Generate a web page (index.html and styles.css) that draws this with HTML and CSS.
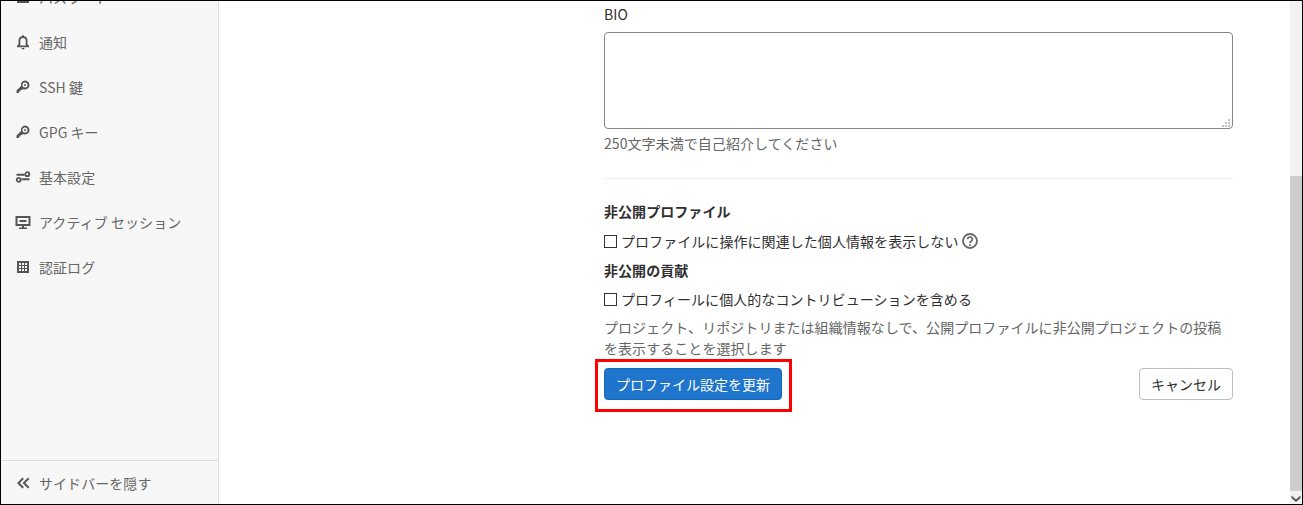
FILE: index.html
```html
<!DOCTYPE html>
<html lang="ja">
<head>
<meta charset="utf-8">
<title>プロファイル設定</title>
<link rel="stylesheet" href="styles.css">
</head>
<body>
<div class="shell">
  <aside class="sidebar">
    <nav class="nav">
      <a class="nav-item"><svg class="icon" viewBox="0 0 16 16"><path d="M2 2h12v12H2z M4 4v8h8V4z" fill-rule="evenodd"/><path d="M7 7h2v3H7z"/></svg><span>パスワード</span></a>
      <a class="nav-item"><svg class="icon" viewBox="0 0 16 16"><path d="M8 1.200c.7 0 1.200.5 1.200 1.100A4.500 4.500 0 0 1 12.500 6.700V10l1.500 2v1.200H2V12l1.500-2V6.700A4.500 4.500 0 0 1 6.800 2.300c0-.6.500-1.100 1.200-1.100zM8 4a2.700 2.700 0 0 0-2.700 2.700v4.800h5.400V6.700A2.700 2.700 0 0 0 8 4z" fill-rule="evenodd"/><path d="M6.500 14h3a1.500 1.500 0 0 1-3 0z"/></svg><span>通知</span></a>
      <a class="nav-item"><svg class="icon" viewBox="0 0 16 16"><path d="M10 1.500a4.500 4.500 0 1 1-2 8.500L7 11H5.500v1.500H4V14H1.500v-2.500L6 7a4.500 4.500 0 0 1 4-5.500zM10 3.500a2.500 2.500 0 1 0 0 5 2.500 2.500 0 0 0 0-5z" fill-rule="evenodd"/><circle cx="10" cy="6" r="1"/></svg><span>SSH 鍵</span></a>
      <a class="nav-item"><svg class="icon" viewBox="0 0 16 16"><path d="M10 1.500a4.500 4.500 0 1 1-2 8.500L7 11H5.500v1.500H4V14H1.500v-2.500L6 7a4.500 4.500 0 0 1 4-5.500zM10 3.500a2.500 2.500 0 1 0 0 5 2.500 2.500 0 0 0 0-5z" fill-rule="evenodd"/><circle cx="10" cy="6" r="1"/></svg><span>GPG キー</span></a>
      <a class="nav-item"><svg class="icon" viewBox="0 0 16 16"><path d="M1.500 4.700h8v2h-8zM6.500 9.300h8v2h-8z"/><circle cx="12.300" cy="5.200" r="2" fill="none" stroke="currentColor" stroke-width="1.800"/><circle cx="3.700" cy="10.800" r="2" fill="none" stroke="currentColor" stroke-width="1.800"/></svg><span>基本設定</span></a>
      <a class="nav-item"><svg class="icon" viewBox="0 0 16 16"><path d="M0.500 2h15v10h-15zM2.500 4v6h11V4z" fill-rule="evenodd"/><path d="M4.500 6h7v2h-7zM7 12h2v1.500h3V15H4v-1.500h3z"/></svg><span>アクティブ セッション</span></a>
      <a class="nav-item"><svg class="icon" viewBox="0 0 16 16"><path d="M2 2h12v12H2zM4 4v2h2V4zM7 4v2h2V4zM10 4v2h2V4zM4 7v2h2V7zM7 7v2h2V7zM10 7v2h2V7zM4 10v2h2v-2zM7 10v2h2v-2zM10 10v2h2v-2z" fill-rule="evenodd"/></svg><span>認証ログ</span></a>
    </nav>
    <div class="collapse">
      <svg class="icon" viewBox="0 0 16 16"><path d="M7.500 2.500L2 8l5.500 5.500 1.400-1.400L4.800 8l4.100-4.100zM13 2.500L7.500 8l5.500 5.500 1.400-1.400L10.300 8l4.100-4.100z"/></svg><span>サイドバーを隠す</span>
    </div>
  </aside>
  <main class="main">
    <form class="form">
      <label class="label">BIO</label>
      <div class="bio-wrap">
        <textarea class="bio"></textarea>
        <svg class="grip" viewBox="0 0 9 9"><path d="M7 1h2v2H7zM4 4h2v2H4zM7 4h2v2H7zM1 7h2v2H1zM4 7h2v2H4zM7 7h2v2H7z"/></svg>
      </div>
      <p class="hint hint-bio">250文字未満で自己紹介してください</p>
      <hr class="rule">
      <h4 class="heading">非公開プロファイル</h4>
      <label class="check"><span class="box"></span><span>プロファイルに操作に関連した個人情報を表示しない</span><svg class="help" viewBox="0 0 16 16"><circle cx="8" cy="8" r="7" fill="none" stroke="currentColor" stroke-width="1.800"/><path d="M5.700 6.300a2.300 2.300 0 1 1 3.500 2c-.8.500-1.200.9-1.200 1.700" fill="none" stroke="currentColor" stroke-width="1.700"/><circle cx="8" cy="12" r="1"/></svg></label>
      <h4 class="heading heading-two">非公開の貢献</h4>
      <label class="check"><span class="box"></span><span>プロフィールに個人的なコントリビューションを含める</span></label>
      <p class="hint hint-private">プロジェクト、リポジトリまたは組織情報なしで、公開プロファイルに非公開プロジェクトの投稿を表示することを選択します</p>
      <div class="actions">
        <span class="marked"><button type="button" class="btn btn-primary">プロファイル設定を更新</button></span>
        <button type="button" class="btn btn-cancel">キャンセル</button>
      </div>
    </form>
  </main>
  <div class="scrollbar">
    <div class="track"><div class="thumb"></div></div>
    <svg class="arrow" viewBox="0 0 12 13"><path d="M1.500 4.500L6 8.500l4.500-4V7L6 11 1.500 7z"/></svg>
  </div>
</div>
</body>
</html>
```
FILE: styles.css
```css
* { box-sizing: border-box; }
html, body { margin: 0; height: 100%; }
body {
  font-family: "Noto Sans CJK JP", "Noto Sans", sans-serif;
  font-size: 14px;
  letter-spacing: .06px;
  color: #303030;
  background: #fff;
  overflow: hidden;
}
.shell {
  display: flex;
  height: 505px;
  border: 1px solid #000;
  overflow: hidden;
}
.sidebar {
  width: 218px;
  flex: none;
  display: flex;
  flex-direction: column;
  background-color: #f7f7f7;
  background-image: conic-gradient(#f4f4f4 25%, #fafafa 0 50%, #f4f4f4 0 75%, #fafafa 0);
  background-size: 2px 2px;
  border-right: 1px solid #dcdcdc;
  color: #666;
}
.nav { flex: 1; margin-top: -27px; }
.nav-item, .collapse {
  display: flex;
  align-items: center;
  gap: 8px;
  height: 45px;
  padding-left: 14px;
  font-size: 14px;
  white-space: nowrap;
}
.icon { width: 16px; height: 16px; fill: #555; color: #555; flex: none; }
.collapse { border-top: 1px solid #dcdcdc; height: 44px; padding-top: 1px; }
.main { flex: 1; min-width: 0; padding-left: 385px; }
.form { width: 629px; display: flex; flex-direction: column; margin-top: 3px; }
.label { font-size: 14px; line-height: 20px; height: 20px; color: #303030; }
.bio-wrap { position: relative; margin-top: 8px; }
.bio {
  display: block;
  width: 629px;
  height: 97px;
  border: 1px solid #868686;
  border-radius: 4px;
  background: #fff;
  padding: 6px;
  resize: none;
}
.grip { position: absolute; right: 3px; bottom: 2px; width: 9px; height: 9px; fill: #c4c4c4; }
.hint { margin: 0; color: #666; font-size: 14px; line-height: 20px; }
.hint-bio { margin-top: 4px; }
.rule { width: 100%; margin: 25px 0 0; border: 0; border-top: 1px solid #eee; }
.heading { margin: 22px 0 0; font-size: 14px; line-height: 20px; font-weight: 700; color: #303030; }
.heading-two { margin-top: 9px; }
.check { display: flex; align-items: center; height: 20px; margin-top: 10px; font-size: 14px; color: #303030; line-height: 20px; }
.heading-two + .check { margin-top: 9px; }
.box { width: 13px; height: 13px; border: 1px solid #333; background: #fff; margin-right: 4px; flex: none; }
.help { width: 16px; height: 16px; margin-left: 4px; fill: #666; color: #666; }
.hint-private { margin-top: 8px; line-height: 21px; }
.actions { display: flex; justify-content: space-between; margin-top: 9px; }
.marked { position: relative; display: block; height: 32px; }
.marked::after {
  content: "";
  position: absolute;
  inset: -9px -10px -12px -9px;
  border: 3px solid #f00;
}
.btn { font: inherit; font-size: 14px; height: 32px; border-radius: 4px; padding: 0 11px; white-space: nowrap; }
.btn-primary { background: #1f75cb; border: 1px solid #1068bf; color: #fff; }
.btn-cancel { background: #fff; border: 1px solid #bfbfbf; color: #303030; }
.scrollbar {
  width: 12px;
  flex: none;
  display: flex;
  flex-direction: column;
  background-color: #f2f2f2;
  background-image: conic-gradient(#eeeeee 25%, #f6f6f6 0 50%, #eeeeee 0 75%, #f6f6f6 0);
  background-size: 2px 2px;
}
.track { flex: 1; padding-top: 175px; }
.thumb { height: 100%; background: #cdcdcd; }
.arrow { width: 12px; height: 13px; fill: #505050; flex: none; }
```
